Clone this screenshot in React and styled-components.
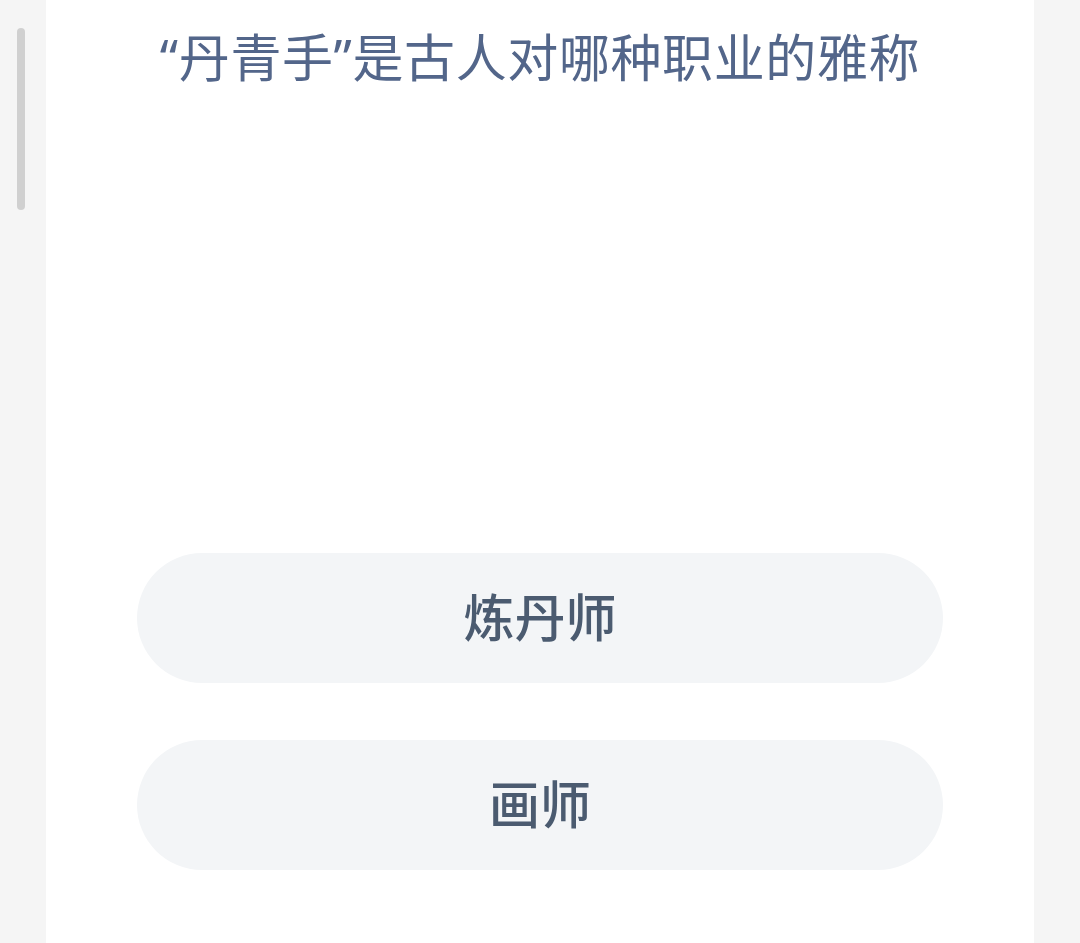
import React from "react";
import styled, { createGlobalStyle } from "styled-components";

const Global = createGlobalStyle`
  html, body { margin: 0; padding: 0; background: #f5f5f5; }
  body { font-family: "Noto Sans CJK SC", "Noto Sans", sans-serif; }
`;

const Page = styled.div`
  display: flex;
  width: 1080px;
  height: 943px;
  overflow: hidden;
  background: #f5f5f5;
`;

const Gutter = styled.div`
  width: 46px;
  flex: none;
  display: flex;
  flex-direction: column;
  align-items: flex-start;
`;

const ScrollThumb = styled.div`
  margin: 28px 0 0 17px;
  width: 8px;
  height: 182px;
  border-radius: 4px;
  background: #d0d0d0;
`;

const Card = styled.main`
  width: 988px;
  flex: none;
  background: #ffffff;
  display: flex;
  flex-direction: column;
  align-items: center;
`;

const Question = styled.h1`
  margin: 20px 0 0;
  height: 70px;
  font-size: 51px;
  line-height: 70px;
  letter-spacing: 0.6px;
  font-weight: 400;
  color: #53668a;
  text-align: center;
  white-space: nowrap;
`;

const Quote = styled.span`
  font-family: "Noto Sans", sans-serif;
  line-height: 1;
`;

const Options = styled.div`
  margin-top: 463px;
  display: flex;
  flex-direction: column;
  gap: 57px;
`;

const Option = styled.button`
  width: 806px;
  height: 130px;
  border: none;
  border-radius: 65px;
  background: #f3f5f7;
  color: #4b5b70;
  font-family: "Noto Sans CJK SC", "Noto Sans", sans-serif;
  font-size: 51px;
  font-weight: 500;
  line-height: 1;
  display: flex;
  align-items: center;
  justify-content: center;
  padding: 0 0 6px;
  cursor: pointer;
`;

export default function App() {
  return (
    <>
      <Global />
      <Page>
        <Gutter>
          <ScrollThumb />
        </Gutter>
        <Card>
          <Question>
            <Quote>“</Quote>丹青手<Quote>”</Quote>是古人对哪种职业的雅称
          </Question>
          <Options>
            <Option>炼丹师</Option>
            <Option>画师</Option>
          </Options>
        </Card>
        <Gutter />
      </Page>
    </>
  );
}
